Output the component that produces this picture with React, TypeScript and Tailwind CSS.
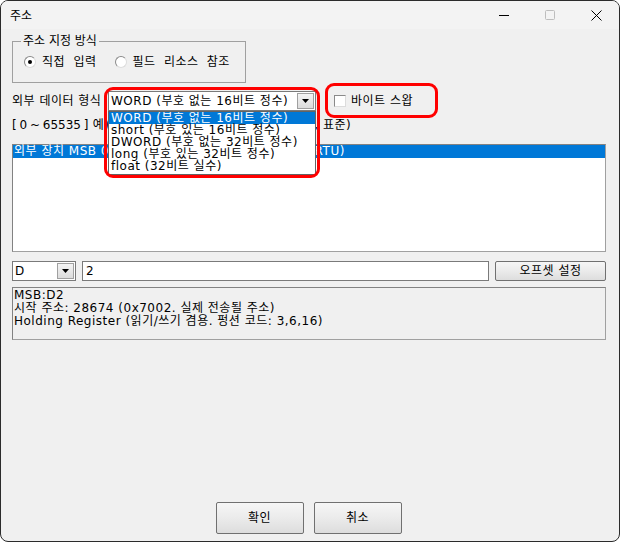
import { useState } from 'react';

const font = { fontFamily: '"DejaVu Sans", "Noto Sans CJK KR", sans-serif' };

const formats = [
  'WORD (부호 없는 16비트 정수)',
  'short (부호 있는 16비트 정수)',
  'DWORD (부호 없는 32비트 정수)',
  'long (부호 있는 32비트 정수)',
  'float (32비트 실수)',
];

const Arrow = () => (
  <svg width="7" height="4" viewBox="0 0 7 4">
    <path d="M0 0h7L3.5 4z" fill="#000" />
  </svg>
);

const Radio = ({ checked }: { checked?: boolean }) => (
  <span className="w-[12px] h-[12px] rounded-full border border-[#8a8a8a] border-r-[#dcdcdc] border-b-[#dcdcdc] bg-white flex items-center justify-center">
    {checked && <span className="w-[4px] h-[4px] rounded-full bg-black" />}
  </span>
);

const App = () => {
  const [selected] = useState(0);

  return (
    <div
      className="w-[620px] h-[542px] bg-[#f0f0f0] border border-[#2b2b2b] rounded-[8px] overflow-hidden flex flex-col relative text-[12px] text-black leading-[14px] tracking-[0.5px]"
      style={font}
    >
      {/* title bar */}
      <div className="h-[28px] flex items-center pl-[9px] bg-[#f3f3f3] tracking-normal">
        <span className="text-[12px]" style={{ fontFamily: '"Noto Sans CJK KR", sans-serif' }}>주소</span>
        <div className="ml-auto flex items-center h-full">
          <div className="w-[46px] h-full flex items-center justify-center">
            <svg width="10" height="10" viewBox="0 0 10 10"><path d="M0 5.5h10" stroke="#000" strokeWidth="1" /></svg>
          </div>
          <div className="w-[46px] h-full flex items-center justify-center">
            <svg width="10" height="10" viewBox="0 0 10 10"><rect x="0.5" y="0.5" width="9" height="9" rx="1" fill="none" stroke="#bdbdbd" /></svg>
          </div>
          <div className="w-[46px] h-full flex items-center justify-center">
            <svg width="11" height="11" viewBox="0 0 11 11"><path d="M0.5 0.5l10 10M10.5 0.5l-10 10" stroke="#000" strokeWidth="1" /></svg>
          </div>
        </div>
      </div>

      <div className="flex-1 flex flex-col pl-[9px] pr-[12px]">
        {/* address mode group */}
        <fieldset className="mt-[5px] ml-[2px] w-[234px] h-[49px] border border-[#a0a0a0] pl-[11px]">
          <legend className="ml-[-3px] px-[2px] leading-[14px] tracking-normal">주소 지정 방식</legend>
          <div className="flex items-center pt-[7px] [word-spacing:4px]">
            <Radio checked />
            <span className="ml-[6px]">직접 입력</span>
            <span className="ml-[19px]"><Radio /></span>
            <span className="ml-[5px]">필드 리소스 참조</span>
          </div>
        </fieldset>

        {/* data format row */}
        <div className="mt-[8px] ml-[2px] flex items-center h-[20px]">
          <span className="w-[96px]">외부 데이터 형식</span>
          <div className="w-[208px] h-[20px] bg-white border border-[#7a7a7a] flex items-center">
            <span className="pl-[2px] flex-1 whitespace-nowrap overflow-hidden">{formats[selected]}</span>
            <div className="w-[17px] h-[16px] mr-[1px] border border-[#a0a0a0] bg-gradient-to-b from-[#f4f4f4] to-[#dcdcdc] flex items-center justify-center">
              <Arrow />
            </div>
          </div>
          <div className="ml-[18px] flex items-center">
            <span className="w-[12px] h-[12px] border border-[#8a8a8a] border-r-[#dcdcdc] border-b-[#dcdcdc] bg-white" />
            <span className="ml-[5px]">바이트 스왑</span>
          </div>
        </div>

        <div className="mt-[7px] ml-[2px] h-[14px] whitespace-nowrap">
          <span className="tracking-normal [word-spacing:-1px]">[ 0 ~ 65535 ]</span> 예) 1234 = 0x04D2 (상위 바이트 먼저, 표준)
        </div>

        {/* list */}
        <div className="mt-[12px] ml-[2px] w-[594px] h-[108px] bg-white border border-[#a0a0a0] border-t-[#828282] border-l-[#828282]">
          <div className="h-[13px] leading-[13px] bg-[#0078d7] text-white pl-[1px] whitespace-nowrap">
            외부 장치 MSB 0번지 기준 주소부터 시작함 (Modbus_RTU)
          </div>
        </div>

        {/* device / offset row */}
        <div className="mt-[9px] ml-[2px] flex items-center h-[20px] gap-[6px]">
          <div className="w-[64px] h-[20px] bg-white border border-[#7a7a7a] flex items-center">
            <span className="pl-[2px] flex-1">D</span>
            <div className="w-[17px] h-[16px] mr-[1px] border border-[#a0a0a0] bg-gradient-to-b from-[#f4f4f4] to-[#dcdcdc] flex items-center justify-center">
              <Arrow />
            </div>
          </div>
          <div className="w-[407px] h-[20px] bg-white border border-[#7a7a7a] pl-[3px] leading-[18px]">2</div>
          <button className="w-[111px] h-[20px] rounded-[2px] border border-[#707070] bg-gradient-to-b from-[#f6f6f6] via-[#ebebeb] to-[#dddddd] leading-[18px]">
            오프셋 설정
          </button>
        </div>

        {/* info box */}
        <div className="mt-[6px] ml-[2px] w-[594px] h-[53px] border border-[#a0a0a0] border-t-[#828282] border-l-[#828282] pl-[1px] pt-[1px] leading-[13px]">
          <div>MSB:D2</div>
          <div>시작 주소: 28674 (0x7002. 실제 전송될 주소)</div>
          <div>Holding Register (읽기/쓰기 겸용. 펑션 코드: 3,6,16)</div>
        </div>

        {/* buttons */}
        <div className="mt-auto mb-[7px] flex justify-center gap-[10px]">
          <button className="w-[88px] h-[32px] rounded-[2px] border border-[#707070] bg-gradient-to-b from-[#f6f6f6] via-[#ebebeb] to-[#dddddd]">확인</button>
          <button className="w-[88px] h-[32px] rounded-[2px] border border-[#707070] bg-gradient-to-b from-[#f6f6f6] via-[#ebebeb] to-[#dddddd]">취소</button>
        </div>
      </div>

      {/* open dropdown list */}
      <div className="absolute left-[107px] top-[110px] w-[208px] h-[64px] bg-white border border-[#646464] overflow-hidden">
        {formats.map((f, i) => (
          <div
            key={f}
            className={`h-[12px] leading-[12px] pl-[2px] whitespace-nowrap ${i === selected ? 'bg-[#0078d7] text-white' : ''}`}
          >
            {f}
          </div>
        ))}
      </div>

      {/* red annotation boxes */}
      <div className="absolute left-[103px] top-[86px] w-[216px] h-[91px] border-[3px] border-[#ff0000] rounded-[9px]" />
      <div className="absolute left-[324px] top-[82px] w-[113px] h-[35px] border-[3px] border-[#ff0000] rounded-[9px]" />
    </div>
  );
};

export default App;
